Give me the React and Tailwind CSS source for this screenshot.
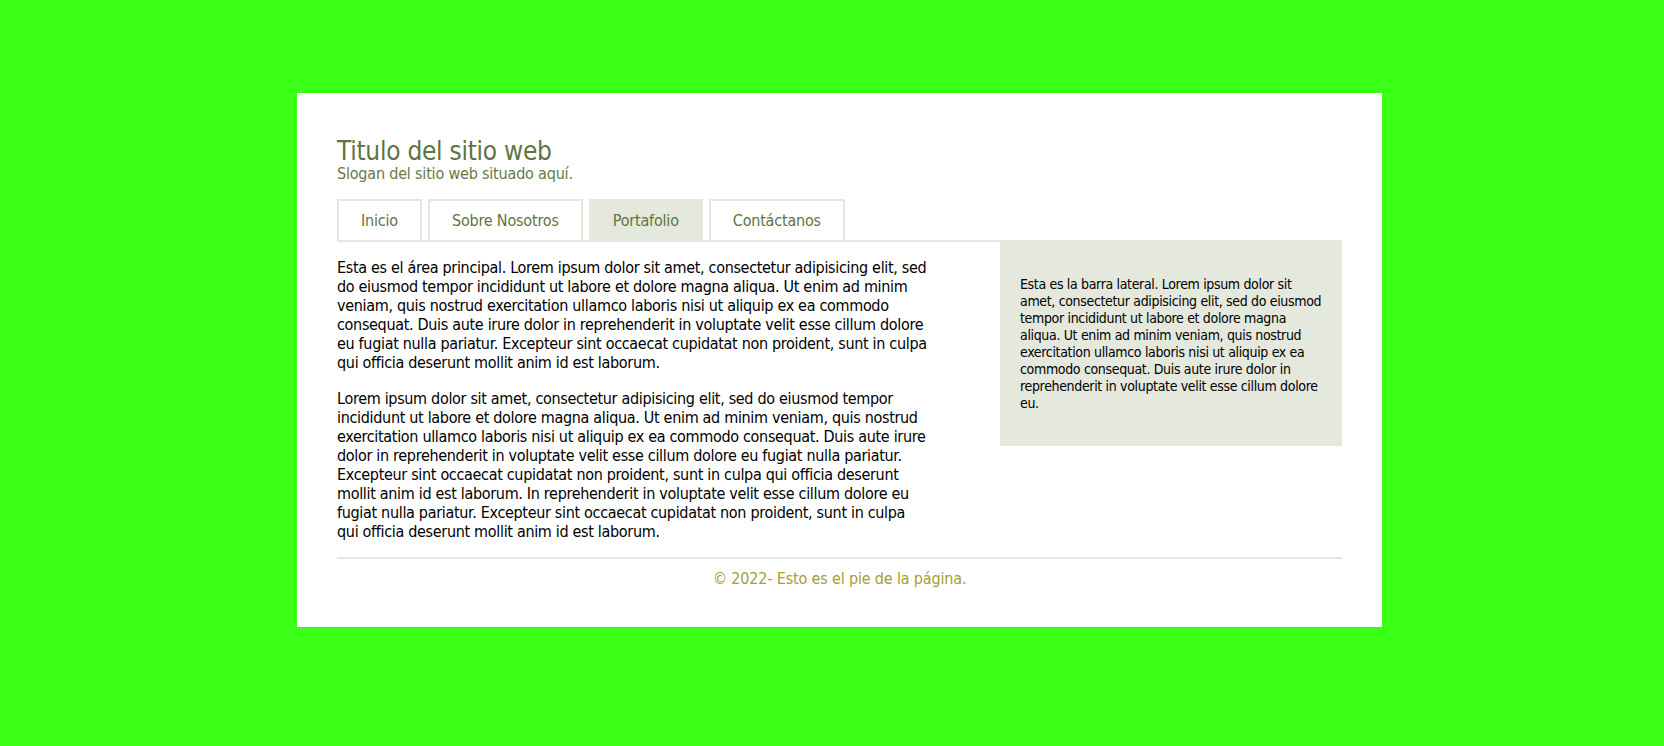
import React from 'react';

const tabs = [
  { label: 'Inicio', active: false },
  { label: 'Sobre Nosotros', active: false },
  { label: 'Portafolio', active: true },
  { label: 'Contáctanos', active: false },
];

const App = () => {
  return (
    <div className="min-h-screen bg-[#3aff17] pt-[93px] pl-[297px] font-['DejaVu_Sans_Condensed','DejaVu_Sans',sans-serif] font-stretch-condensed">
      <div className="w-[1085px] bg-white px-[40px] pt-[46px] pb-[39px]">
        {/* Header */}
        <header>
          <h1 className="text-[26px] leading-[25px] tracking-[-0.01em] text-[#5f7343]">Titulo del sitio web</h1>
          <p className="text-[16px] leading-[19px] tracking-[-0.012em] text-[#667a48]">Slogan del sitio web situado aquí.</p>
        </header>

        {/* Tabs */}
        <nav className="mt-[16px] border-b-2 border-[#e6e6df]">
          <ul className="flex gap-[6px]">
            {tabs.map((tab) => (
              <li
                key={tab.label}
                className={
                  tab.active
                    ? 'border-2 border-b-0 border-[#e5e8dc] bg-[#e5e8dc] px-[22px] py-[10px] text-[16px] leading-[19px] tracking-[-0.012em] text-[#5f7343]'
                    : 'border-2 border-b-0 border-[#e6e6df] bg-white px-[22px] py-[10px] text-[16px] leading-[19px] tracking-[-0.012em] text-[#5f7343]'
                }
              >
                {tab.label}
              </li>
            ))}
          </ul>
        </nav>

        {/* Content */}
        <div className="flex justify-between">
          <main className="w-[592px] text-[16px] leading-[19.1px] tracking-[-0.02em] text-black">
            <p className="my-[16px]">
              Esta es el área principal. Lorem ipsum dolor sit amet, consectetur adipisicing elit, sed do eiusmod tempor
              incididunt ut labore et dolore magna aliqua. Ut enim ad minim veniam, quis nostrud exercitation ullamco
              laboris nisi ut aliquip ex ea commodo consequat. Duis aute irure dolor in reprehenderit in voluptate velit
              esse cillum dolore eu fugiat nulla pariatur. Excepteur sint occaecat cupidatat non proident, sunt in culpa
              qui officia deserunt mollit anim id est laborum.
            </p>
            <p className="my-[16px]">
              Lorem ipsum dolor sit amet, consectetur adipisicing elit, sed do eiusmod tempor incididunt ut labore et
              dolore magna aliqua. Ut enim ad minim veniam, quis nostrud exercitation ullamco laboris nisi ut aliquip ex
              ea commodo consequat. Duis aute irure dolor in reprehenderit in voluptate velit esse cillum dolore eu fugiat
              nulla pariatur. Excepteur sint occaecat cupidatat non proident, sunt in culpa qui officia deserunt mollit
              anim id est laborum. In reprehenderit in voluptate velit esse cillum dolore eu fugiat nulla pariatur.
              Excepteur sint occaecat cupidatat non proident, sunt in culpa qui officia deserunt mollit anim id est
              laborum.
            </p>
          </main>

          <aside className="w-[342px] self-start bg-[#e5e8dc] px-[20px] py-[34px] text-[14px] leading-[17px] tracking-[-0.024em] text-black">
            <p>
              Esta es la barra lateral. Lorem ipsum dolor sit amet, consectetur adipisicing elit, sed do eiusmod tempor
              incididunt ut labore et dolore magna aliqua. Ut enim ad minim veniam, quis nostrud exercitation ullamco
              laboris nisi ut aliquip ex ea commodo consequat. Duis aute irure dolor in reprehenderit in voluptate velit
              esse cillum dolore eu.
            </p>
          </aside>
        </div>

        {/* Footer */}
        <footer className="border-t-2 border-[#e6e6df] pt-[10px] text-center text-[16px] leading-[19px] tracking-[-0.01em] text-[#a3a02f]">
          © 2022- Esto es el pie de la página.
        </footer>
      </div>
    </div>
  );
};

export default App;
